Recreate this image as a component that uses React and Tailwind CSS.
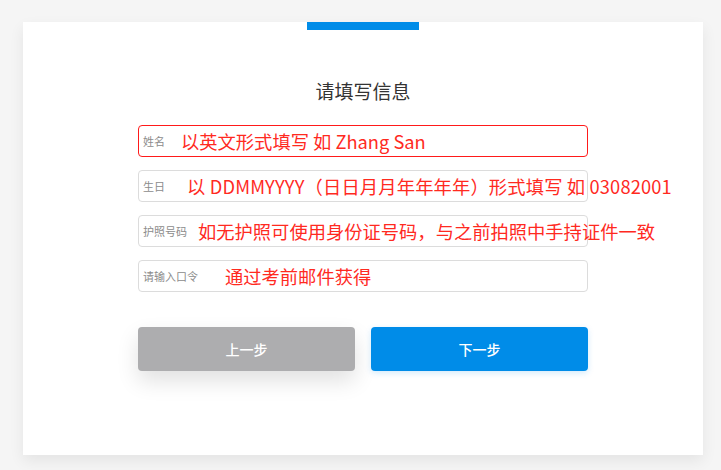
import React from 'react';

const fields = [
    { label: '姓名', hint: '以英文形式填写 如 Zhang San', gap: 'ml-[16px]', active: true },
    { label: '生日', hint: '以 DDMMYYYY（日日月月年年年年）形式填写 如 03082001', gap: 'ml-[22px] tracking-[0.15px]' },
    { label: '护照号码', hint: '如无护照可使用身份证号码，与之前拍照中手持证件一致', gap: 'ml-[11px]' },
    { label: '请输入口令', hint: '通过考前邮件获得', gap: 'ml-[27px]' },
];

export default function App() {
    return (
        <div
            className="w-[721px] h-[470px] bg-[#f5f5f5] pt-[22px] px-[23px] overflow-hidden"
            style={{ fontFamily: '"Noto Sans CJK SC", "Noto Sans", sans-serif' }}
        >
            <div className="w-[680px] h-[433px] bg-white shadow-[0_6px_14px_rgba(0,0,0,0.07)] flex flex-col items-center">
                {/* step indicator */}
                <div className="w-[112px] h-[8px] bg-[#008ce8]" />

                <h2 className="mt-[48px] text-[19px] leading-[26px] text-[#333] font-normal">请填写信息</h2>

                <div className="mt-[21px] flex flex-col gap-[13px]">
                    {fields.map((f) => (
                        <div
                            key={f.label}
                            className={`w-[450px] h-[32px] rounded-[4px] border flex items-center pl-[4px] whitespace-nowrap ${
                                f.active ? 'border-[#ff1a1a]' : 'border-[#dcdcdc]'
                            }`}
                        >
                            <span className="text-[11px] leading-none text-[#8c8c8c]">{f.label}</span>
                            <span className={`${f.gap} text-[18.3px] leading-none text-[#ff2a1f]`}>{f.hint}</span>
                        </div>
                    ))}
                </div>

                <div className="mt-[35px] flex gap-[16px]">
                    <button className="w-[217px] h-[44px] rounded-[4px] bg-[#adadaf] text-white text-[14px] font-medium shadow-[0_10px_22px_rgba(0,0,0,0.12)]">
                        上一步
                    </button>
                    <button className="w-[217px] h-[44px] rounded-[4px] bg-[#008ce8] text-white text-[14px] font-medium shadow-[0_2px_6px_rgba(0,140,232,0.18)]">
                        下一步
                    </button>
                </div>
            </div>
        </div>
    );
}
